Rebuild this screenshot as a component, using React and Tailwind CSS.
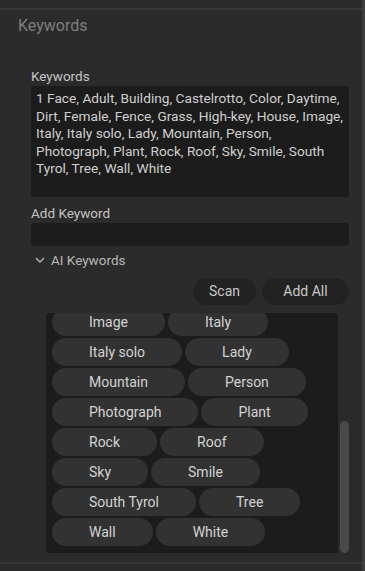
import React from "react";

const keywords = [
  "1 Face", "Adult", "Building", "Castelrotto", "Color", "Daytime", "Dirt", "Female",
  "Fence", "Grass", "High-key", "House", "Image", "Italy", "Italy solo", "Lady",
  "Mountain", "Person", "Photograph", "Plant", "Rock", "Roof", "Sky", "Smile",
  "South Tyrol", "Tree", "Wall", "White",
];

const lines = [
  "1 Face, Adult, Building, Castelrotto, Color, Daytime,",
  "Dirt, Female, Fence, Grass, High-key, House, Image,",
  "Italy, Italy solo, Lady, Mountain, Person,",
  "Photograph, Plant, Rock, Roof, Sky, Smile, South",
  "Tyrol, Tree, Wall, White",
];

export default function App() {
  return (
    <div
      className="w-[365px] h-[571px] bg-[#2b2b2b] flex overflow-hidden"
      style={{ fontFamily: "Roboto, 'Noto Sans', sans-serif" }}
    >
      <div className="flex-1 flex flex-col">
        <div className="h-[8px]" />
        <div className="h-[2px] bg-[#383838]" />
        <div className="pl-[18px] mt-[6px] text-[16px] leading-[20px] text-[#7e7e7e]">Keywords</div>
        <div className="pl-[31px] pr-[13px] flex flex-col">
          <div className="mt-[32px] text-[13.5px] leading-[16px] text-[#c4c4c4]">Keywords</div>
          <div className="mt-[2px] h-[111px] bg-[#1c1c1c] rounded-[3px] pl-[5px] pr-[4px] pt-[4px] text-[13.7px] leading-[17.5px] text-[#cfcfcf]">
            {lines.map((l, i) => (
              <div key={i} className="whitespace-nowrap">{l}</div>
            ))}
          </div>
          <div className="mt-[8px] text-[13.5px] leading-[16px] text-[#c4c4c4]">Add Keyword</div>
          <div className="mt-[2px] h-[23px] bg-[#1c1c1c] rounded-[3px]" />
          <div className="mt-[6px] h-[16px] flex items-center gap-[6px] pl-[4px] text-[13.5px] leading-[16px] text-[#b8b8b8]">
            <svg width="10" height="7" viewBox="0 0 10 7" className="mt-[1px]">
              <polyline points="1,1 5,5 9,1" fill="none" stroke="#b8b8b8" strokeWidth="1.4" />
            </svg>
            <span>AI Keywords</span>
          </div>
          <div className="mt-[10px] flex justify-end gap-[6px]">
            <button className="w-[63px] h-[27px] rounded-full bg-[#222222] text-[14px] text-[#c8c8c8]">Scan</button>
            <button className="w-[87px] h-[27px] rounded-full bg-[#222222] text-[14px] text-[#c8c8c8]">Add All</button>
          </div>
          <div className="mt-[8px] ml-[15px] h-[240px] flex gap-[2px]">
            <div className="flex-1 bg-[#1c1c1c] rounded-[3px] overflow-hidden flex flex-col justify-end">
              <div className="flex flex-wrap gap-x-[3px] gap-y-[2px] pl-[6px] pr-[6px] pb-[7px]">
                {keywords.map((k) => (
                  <div
                    key={k}
                    className="h-[28px] px-[37px] rounded-full bg-[#323232] text-[14px] text-[#d2d2d2] flex items-center justify-center whitespace-nowrap"
                  >
                    {k}
                  </div>
                ))}
              </div>
            </div>
            <div className="w-[9px] flex flex-col justify-end">
              <div className="h-[132px] rounded-full bg-[#4a4a4a]" />
            </div>
          </div>
        </div>
        <div className="mt-[9px] h-[2px] bg-[#383838]" />
      </div>
      <div className="w-[3px] bg-[#3d3d3d]" />
    </div>
  );
}
